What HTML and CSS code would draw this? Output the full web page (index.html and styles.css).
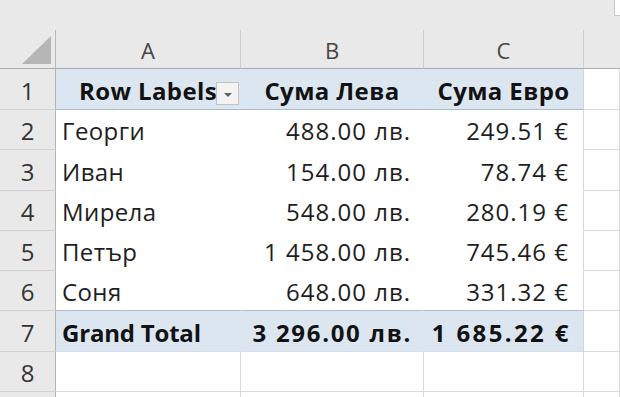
FILE: index.html
```html
<!DOCTYPE html>
<html lang="bg">
<head>
<meta charset="utf-8">
<title>Pivot</title>
<link rel="stylesheet" href="styles.css">
</head>
<body>
<div class="sheet">
  <div class="strip"><div class="strip-box"></div></div>

  <div class="ch corner">
    <svg class="tri" width="29" height="28" viewBox="0 0 29 28"><polygon points="0,28 29,28 29,0" fill="#b5b5b5"/></svg>
  </div>
  <div class="ch">A</div>
  <div class="ch">B</div>
  <div class="ch">C</div>
  <div class="ch last"></div>

  <div class="rh">1</div>
  <div class="c pv head">Row Labels<span class="dd"><svg width="8" height="4" viewBox="0 0 8 4"><polygon points="0,0 8,0 4,4" fill="#606060"/></svg></span></div>
  <div class="c pv head">Сума Лева</div>
  <div class="c pv head cc">Сума Евро</div>
  <div class="c"></div>

  <div class="rh">2</div>
  <div class="c pv name">Георги</div>
  <div class="c pv num">488.00 лв.</div>
  <div class="c pv num cc eur">249.51 €</div>
  <div class="c"></div>

  <div class="rh">3</div>
  <div class="c pv name">Иван</div>
  <div class="c pv num">154.00 лв.</div>
  <div class="c pv num cc eur">78.74 €</div>
  <div class="c"></div>

  <div class="rh">4</div>
  <div class="c pv name">Мирела</div>
  <div class="c pv num">548.00 лв.</div>
  <div class="c pv num cc eur">280.19 €</div>
  <div class="c"></div>

  <div class="rh">5</div>
  <div class="c pv name">Петър</div>
  <div class="c pv num">1&nbsp;458.00 лв.</div>
  <div class="c pv num cc eur">745.46 €</div>
  <div class="c"></div>

  <div class="rh">6</div>
  <div class="c pv pre name">Соня</div>
  <div class="c pv pre num">648.00 лв.</div>
  <div class="c pv pre num cc eur">331.32 €</div>
  <div class="c"></div>

  <div class="rh">7</div>
  <div class="c pv total label">Grand Total</div>
  <div class="c pv total num">3&nbsp;296.00 лв.</div>
  <div class="c pv total num cc eur">1&nbsp;685.22 €</div>
  <div class="c"></div>

  <div class="rh">8</div>
  <div class="c"></div>
  <div class="c"></div>
  <div class="c"></div>
  <div class="c"></div>

  <div class="rh stub"></div>
  <div class="c stub"></div>
  <div class="c stub"></div>
  <div class="c stub"></div>
  <div class="c stub"></div>
</div>
</body>
</html>
```

FILE: styles.css
```css
html, body {
  margin: 0;
  padding: 0;
  background: #ffffff;
}

body {
  width: 620px;
  height: 397px;
  overflow: hidden;
  font-family: "Open Sans", "Noto Sans", sans-serif;
}

.sheet {
  display: grid;
  grid-template-columns: 56px 185px 183px 160px 1fr;
  grid-template-rows: 30px 39px 41px 40px 41px 40px 40px 40px 41px 40px 5px;
  width: 620px;
}

.strip {
  grid-column: 1 / -1;
  background: #e9e9e9;
  display: flex;
  justify-content: flex-end;
  align-items: flex-start;
}

.strip-box {
  width: 5px;
  height: 15px;
  background: #ffffff;
  border-left: 1px solid #c8c8c8;
  border-bottom: 1px solid #c8c8c8;
}

.ch {
  box-sizing: border-box;
  background: #e9e9e9;
  border-right: 1px solid #cdcdcd;
  border-bottom: 1px solid #ababab;
  font-size: 22px;
  line-height: 38px;
  color: #454545;
  text-align: center;
  padding-top: 1px;
}

.ch.corner {
  border-right-color: #b9b9b9;
  display: flex;
  justify-content: flex-end;
  align-items: flex-start;
  padding: 6px 4px 0 0;
}

.tri {
  display: block;
}

.ch.last {
  border-right: none;
}

.rh {
  box-sizing: border-box;
  background: #e9e9e9;
  border-right: 1px solid #b4b4b4;
  border-bottom: 1px solid #d2d2d2;
  font-size: 24px;
  color: #333333;
  display: flex;
  justify-content: center;
  align-items: flex-end;
  padding-bottom: 2px;
  line-height: 32px;
}

.c {
  box-sizing: border-box;
  border-right: 1px solid #dadada;
  border-bottom: 1px solid #dadada;
  font-size: 24px;
  line-height: 32px;
  color: #1e1e1e;
  white-space: nowrap;
  display: flex;
  align-items: flex-end;
  padding: 0 6px 2px 6px;
  position: relative;
}

.stub {
  padding: 0;
  border-bottom: none;
}

.pv {
  border-right-color: transparent;
  border-bottom-color: transparent;
}

.pv.cc {
  border-right-color: #d6d6d6;
}

.name {
  letter-spacing: 0.4px;
}

.num {
  justify-content: flex-end;
  padding-right: 12px;
  letter-spacing: 1px;
}

.eur {
  padding-right: 14px;
}

.pv.head {
  background: #dce6f1;
  border-bottom-color: #a9bad3;
  font-weight: 700;
  color: #121212;
  justify-content: center;
  letter-spacing: 0.4px;
}

.pv.pre {
  border-bottom-color: #a9bad3;
}

.pv.total {
  background: #dce6f1;
  border-bottom-color: #d5dde8;
  font-weight: 700;
  color: #121212;
}

.pv.total.label {
  letter-spacing: -0.2px;
}

.pv.total.num {
  letter-spacing: 1.7px;
  padding-right: 11px;
}

.pv.total.eur {
  letter-spacing: 2.4px;
  padding-right: 12px;
}

.dd {
  position: absolute;
  right: 1px;
  top: 13px;
  width: 23px;
  height: 23px;
  box-sizing: border-box;
  border: 1px solid #c2c2c2;
  background: #f3f3f3;
  display: flex;
  align-items: center;
  justify-content: center;
  padding-top: 3px;
  letter-spacing: 0;
}

.dd svg {
  display: block;
}
```
